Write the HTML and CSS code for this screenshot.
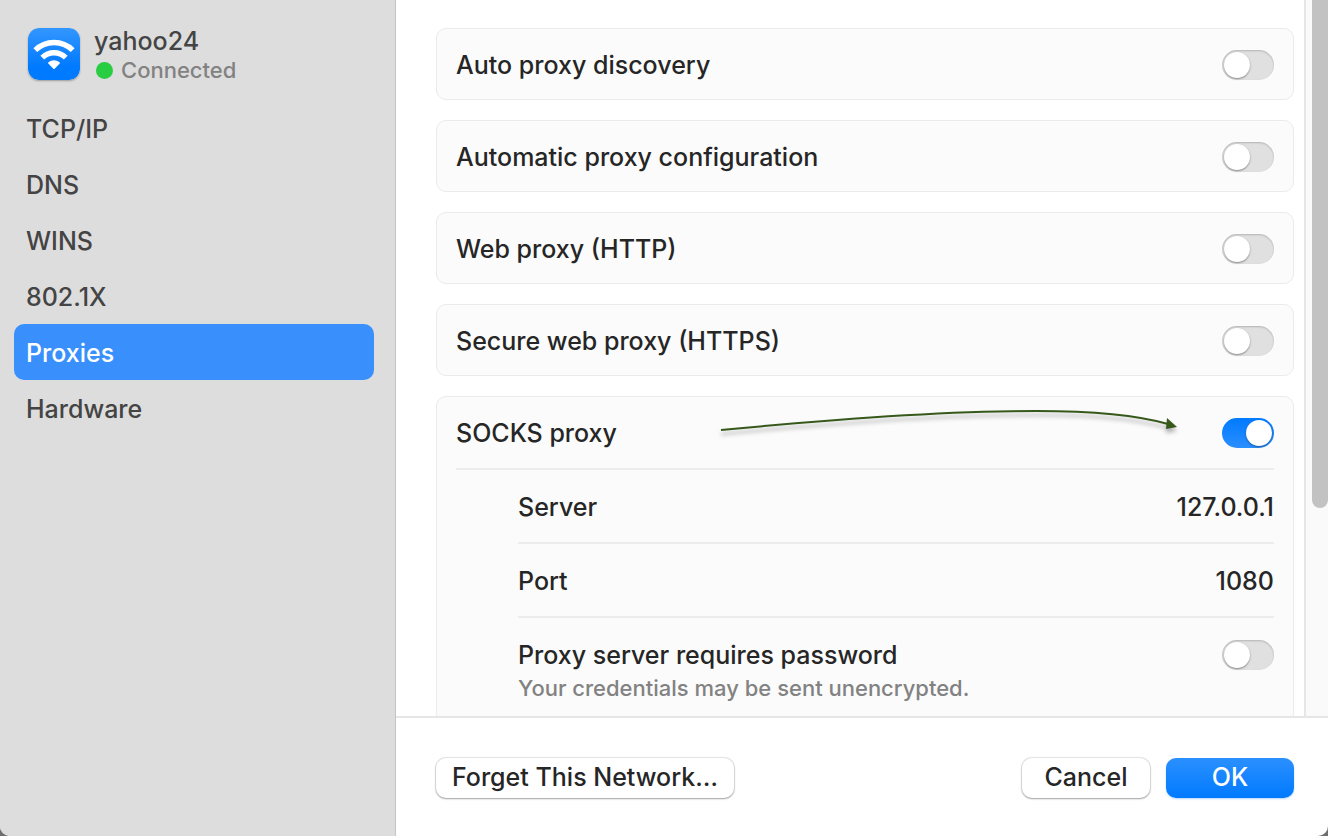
FILE: index.html
```html
<!DOCTYPE html>
<html lang="en">
<head>
<meta charset="utf-8">
<title>Network Proxies</title>
<link rel="stylesheet" href="styles.css">
</head>
<body>
<div class="window">
  <aside class="sidebar">
    <header class="network">
      <svg class="network-icon" viewBox="0 0 52 52" aria-hidden="true">
        <defs>
          <linearGradient id="wifi-fill" x1="0" y1="0" x2="0" y2="1">
            <stop offset="0" stop-color="#3396ff"/>
            <stop offset="0.75" stop-color="#007aff"/>
          </linearGradient>
        </defs>
        <rect width="52" height="52" rx="11" fill="url(#wifi-fill)"/>
        <g fill="none" stroke="#fff" stroke-width="5.4">
          <path d="M7.3 22.2a26.5 26.5 0 0 1 37.4 0"/>
          <path d="M14.3 29.6a16.6 16.6 0 0 1 23.4 0"/>
        </g>
        <path d="M20.3 35.6q-.7-.7 .2-1.3c3.300-2.700 7.700-2.700 11 0q.9.6.2 1.300l-5.300 5.300q-.4.400-.8 0z" fill="#fff"/>
      </svg>
      <div class="network-text">
        <h1 class="network-name">yahoo24</h1>
        <p class="network-status"><span class="status-dot"></span>Connected</p>
      </div>
    </header>
    <nav class="nav">
      <a class="nav-item" href="#tcpip">TCP/IP</a>
      <a class="nav-item" href="#dns">DNS</a>
      <a class="nav-item" href="#wins">WINS</a>
      <a class="nav-item" href="#8021x">802.1X</a>
      <a class="nav-item nav-item-active" href="#proxies" aria-current="page">Proxies</a>
      <a class="nav-item" href="#hardware">Hardware</a>
    </nav>
  </aside>
  <main class="main">
    <div class="viewport">
      <form class="settings" id="proxies">
        <div class="card"><div class="row">
          <label for="discovery">Auto proxy discovery</label>
          <input class="switch" type="checkbox" id="discovery">
        </div></div>
        <div class="card"><div class="row">
          <label for="automatic">Automatic proxy configuration</label>
          <input class="switch" type="checkbox" id="automatic">
        </div></div>
        <div class="card"><div class="row">
          <label for="http">Web proxy (HTTP)</label>
          <input class="switch" type="checkbox" id="http">
        </div></div>
        <div class="card"><div class="row">
          <label for="https">Secure web proxy (HTTPS)</label>
          <input class="switch" type="checkbox" id="https">
        </div></div>
        <div class="card">
          <div class="row row-divided row-head">
            <label for="socks">SOCKS proxy</label>
            <svg class="arrow" viewBox="0 0 468 40" aria-hidden="true">
              <path d="M5 26C130 14 240 7 320 7C385 7 424 12 452 20" fill="none" stroke="#36581a" stroke-width="2"/>
              <path d="M451 14L461 23L450 25z" fill="#36581a"/>
            </svg>
            <input class="switch" type="checkbox" id="socks" checked>
          </div>
          <div class="details">
            <div class="row row-divided">
              <label for="server">Server</label>
              <input class="field" type="text" id="server" value="127.0.0.1">
            </div>
            <div class="row row-divided">
              <label for="port">Port</label>
              <input class="field" type="text" id="port" value="1080">
            </div>
            <div class="password">
              <div class="password-line">
                <label for="password">Proxy server requires password</label>
                <input class="switch" type="checkbox" id="password">
              </div>
              <p class="hint">Your credentials may be sent unencrypted.</p>
            </div>
          </div>
        </div>
      </form>
      <div class="scroll-track"><div class="scroll-thumb"></div></div>
    </div>
    <footer class="actions">
      <button class="button button-forget" type="button">Forget This Network…</button>
      <button class="button" type="button">Cancel</button>
      <button class="button button-primary" type="button">OK</button>
    </footer>
  </main>
</div>
</body>
</html>
```
FILE: styles.css
```css
* {
  box-sizing: border-box;
}

body {
  margin: 0;
  background: #6e6e6e;
  color: #262626;
  font-family: Inter, "Liberation Sans", sans-serif;
  font-size: 25px;
  font-weight: 450;
  line-height: 32px;
}

h1,
p {
  margin: 0;
  font-weight: inherit;
}

.window {
  display: grid;
  grid-template-rows: minmax(0, 1fr);
  grid-template-columns: 396px minmax(0, 1fr);
  height: 100vh;
  overflow: hidden;
  border-radius: 0 0 10px 10px;
  background: #fff;
}

.sidebar {
  padding: 24px 21px 0 14px;
  border-right: 1px solid #c4c4c4;
  background: #ddd;
  color: #444;
}

.network {
  display: flex;
  gap: 14px;
  height: 76px;
  padding-left: 14px;
}

.network-icon {
  width: 52px;
  height: 52px;
  margin-top: 4px;
  border-radius: 11px;
  box-shadow: 0 1px 2px rgba(0, 0, 0, 0.3);
}

.network-name {
  padding-top: 1px;
  font-size: 25px;
  line-height: 32px;
}

.network-status {
  display: flex;
  align-items: center;
  gap: 8px;
  padding-left: 2px;
  color: #828282;
  font-size: 22px;
  line-height: 27px;
}

.status-dot {
  width: 17px;
  height: 17px;
  border-radius: 50%;
  background: #28cd41;
}

.nav {
  display: flex;
  flex-direction: column;
}

.nav-item {
  padding: 13px 12px 11px;
  border-radius: 10px;
  color: inherit;
  text-decoration: none;
}

.nav-item-active {
  background: #3990fd;
  color: #fff;
}

.main {
  display: flex;
  flex-direction: column;
  min-width: 0;
}

.viewport {
  display: flex;
  flex: 1;
  min-height: 0;
  overflow: hidden;
}

.settings {
  display: flex;
  flex: 1;
  flex-direction: column;
  gap: 20px;
  min-width: 0;
  padding: 28px 10px 28px 40px;
}

.card {
  flex: none;
  padding: 0 19px;
  border: 1px solid #ebebeb;
  border-radius: 10px;
  background: #fbfbfb;
}

.row {
  display: flex;
  align-items: center;
  justify-content: space-between;
  min-height: 70px;
  padding-top: 2px;
}

.row-divided {
  min-height: 74px;
  border-bottom: 2px solid #ececec;
}

.row-head {
  position: relative;
  min-height: 73px;
  padding-top: 0;
}

.details {
  padding-left: 62px;
}

.arrow {
  position: absolute;
  top: 7px;
  right: 90px;
  width: 468px;
  height: 40px;
  filter: drop-shadow(0 4px 2px rgba(0, 0, 0, 0.3));
}

.switch {
  position: relative;
  flex: none;
  appearance: none;
  width: 52px;
  height: 30px;
  margin: 0;
  border-radius: 15px;
  background: #e0e0e0;
  box-shadow: inset 0 1px 2px rgba(0, 0, 0, 0.2);
}

.switch::before {
  content: "";
  position: absolute;
  top: 2px;
  left: 2px;
  width: 26px;
  height: 26px;
  border-radius: 50%;
  background: #fff;
  box-shadow: 0 1px 2px rgba(0, 0, 0, 0.4);
}

.switch:checked {
  background: linear-gradient(#007aff, #2b8fff);
  box-shadow: none;
}

.switch:checked::before {
  left: 24px;
}

.field {
  width: 300px;
  padding: 0;
  border: 0;
  background: transparent;
  color: inherit;
  font: inherit;
  text-align: right;
}

.password {
  padding: 21px 0 17px;
}

.password-line {
  display: flex;
  align-items: center;
  justify-content: space-between;
}

.hint {
  color: #828282;
  font-size: 22px;
  line-height: 34px;
}

.scroll-track {
  display: flex;
  flex: none;
  justify-content: flex-end;
  width: 24px;
  border-left: 2px solid #e6e6e6;
  background: #fafafa;
}

.scroll-thumb {
  width: 16px;
  height: 71%;
  border-radius: 0 0 8px 8px;
  background: #c2c2c2;
}

.actions {
  display: flex;
  gap: 16px;
  padding: 40px 34px 38px 40px;
  border-top: 2px solid #e6e6e6;
}

.button {
  min-width: 128px;
  height: 40px;
  padding: 0 16px 2px;
  border: 0;
  border-radius: 10px;
  background: #fff;
  box-shadow: 0 0 1px 1px rgba(0, 0, 0, 0.1), 0 1px 2px rgba(0, 0, 0, 0.3);
  color: inherit;
  font: inherit;
}

.button-forget {
  min-width: 298px;
  margin-right: auto;
}

.button-primary {
  background: linear-gradient(#2b90ff, #007aff);
  box-shadow: 0 1px 2px rgba(0, 122, 255, 0.3);
  color: #fff;
}
```
